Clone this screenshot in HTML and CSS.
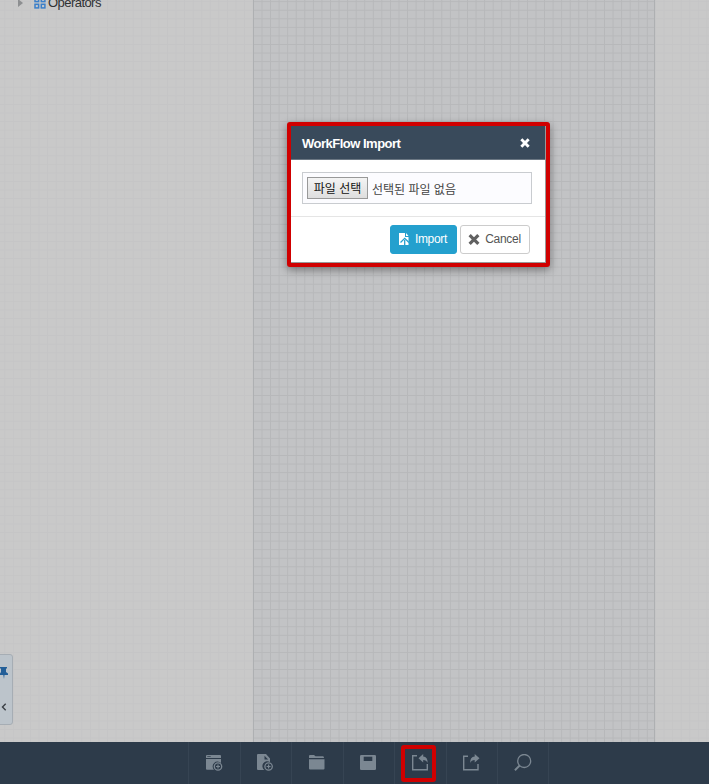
FILE: index.html
```
<!DOCTYPE html>
<html lang="ko">
<head>
<meta charset="utf-8">
<title>WorkFlow</title>
<link rel="stylesheet" href="styles.css">
</head>
<body>
<div class="app">
  <main class="workspace">
    <aside class="tree">
      <div class="tree-item">
        <svg class="arrow" width="5" height="8" viewBox="0 0 5 8"><path d="M0 0L5 4L0 8Z" fill="#8d8f91"/></svg>
        <svg class="grid-icon" width="12" height="12" viewBox="0 0 12 12" fill="none" stroke="#3b7fc9" stroke-width="1.5"><rect x="1" y="1" width="3.6" height="3.6"/><rect x="7.3" y="1" width="3.6" height="3.6"/><rect x="1" y="7.3" width="3.6" height="3.6"/><rect x="7.3" y="7.3" width="3.6" height="3.6"/></svg>
        <span>Operators</span>
      </div>
    </aside>
    <section class="canvas"></section>
    <aside class="side"></aside>
    <div class="pin-tab">
      <svg width="8" height="12" viewBox="0 0 8 12"><path d="M0 0H7V1.5H6V5L8 6.5V8H4.5L4 12L3.3 8H0V6.5L1 5V1.5H0Z" fill="#235f98"/></svg>
      <svg width="6" height="8" viewBox="0 0 6 8"><path d="M4.7 .8L1.5 4L4.7 7.2" fill="none" stroke="#3b4046" stroke-width="1.4"/></svg>
    </div>
  </main>
  <nav class="toolbar">
    <button class="tool"><svg width="18" height="18" viewBox="0 0 18 18"><path d="M2 1H15Q16 1 16 2V4H1V2Q1 1 2 1ZM1 5H16V9A4.6 4.6 0 0 0 9 15.8H2Q1 15.8 1 15Z" fill="#7b8792"/><path d="M2.5 2.5H6" stroke="#2d3b4a" stroke-dasharray="1.2 .6"/><circle cx="13" cy="12.5" r="3.7" fill="#2d3b4a" stroke="#7b8792" stroke-width="1.3"/><path d="M11 12.5H15M13 10.5V14.5" stroke="#7b8792" stroke-width="1.2"/></svg></button>
    <button class="tool"><svg width="18" height="18" viewBox="0 0 18 18"><path d="M2 0H10L14 4.5V8.2A4.7 4.7 0 0 0 8.4 16H2Q1 16 1 15V1Q1 0 2 0Z" fill="#7b8792"/><path d="M8.5 1.8V5.5H12.2Z" fill="#2d3b4a"/><circle cx="12.6" cy="12.5" r="3.7" fill="#2d3b4a" stroke="#7b8792" stroke-width="1.3"/><path d="M10.6 12.5H14.6M12.6 10.5V14.5" stroke="#7b8792" stroke-width="1.2"/></svg></button>
    <button class="tool"><svg width="18" height="18" viewBox="0 0 18 18" fill="#7b8792"><path d="M1 4V2Q1 1 2 1H6L7.5 2.3H15Q16 2.3 16 4ZM1 5.2H16.5V14.6Q16.5 15.6 15.5 15.6H2Q1 15.6 1 14.6Z"/></svg></button>
    <button class="tool"><svg width="18" height="18" viewBox="0 0 18 18"><rect x="1" y="1" width="16" height="15" rx="1.3" fill="#7b8792"/><path d="M4.7 2.7H13.3V7H4.7Z" fill="#2d3b4a"/></svg></button>
    <button class="tool marked"><svg width="18" height="18" viewBox="0 0 18 18"><path d="M6 1.7H1.7V15.8H16.3V10" fill="none" stroke="#7b8792" stroke-width="1.4"/><path d="M7.5 4.3L12.2 0V2.6Q16.8 3 16.6 9Q15.5 6.1 12.2 6V8.5Z" fill="#7b8792"/></svg></button>
    <button class="tool"><svg width="18" height="18" viewBox="0 0 18 18"><path d="M6 2.3H1.7V15.8H16V10" fill="none" stroke="#7b8792" stroke-width="1.4"/><path d="M17.5 4.3L12.7 0V2.6Q8 3 8.2 9Q9.3 6.1 12.7 6V8.5Z" fill="#7b8792"/></svg></button>
    <button class="tool"><svg width="18" height="18" viewBox="0 0 18 18" fill="none" stroke="#7b8792"><circle cx="10.2" cy="7" r="6.5" stroke-width="1.3"/><path d="M5.7 11.5L.9 16.2" stroke-width="1.9"/></svg></button>
  </nav>
</div>
<div class="dialog">
  <header class="dialog-head"><h1>WorkFlow Import</h1><svg width="10" height="10" viewBox="0 0 9 9"><path d="M1.2 1.2L7.8 7.8M7.8 1.2L1.2 7.8" stroke="#fff" stroke-width="2.6"/></svg></header>
  <div class="dialog-body"><div class="file"><button class="choose">파일 선택</button><span>선택된 파일 없음</span></div></div>
  <footer class="dialog-foot">
    <button class="btn primary"><svg width="11" height="12" viewBox="0 0 11 12"><path d="M0 0H6V4H9.5V12H0Z" fill="#fff"/><path d="M7 0L9.5 3H7Z" fill="#fff"/><path d="M1.5 9.5L5.7 5.3L10 9.5M5.7 7V12" fill="none" stroke="#24a0ce" stroke-width="1.3"/></svg><span>Import</span></button>
    <button class="btn"><svg width="12" height="11" viewBox="0 0 11 10"><path d="M1.5 1L9.5 9M9.5 1L1.5 9" stroke="#616161" stroke-width="2.9"/></svg><span>Cancel</span></button>
  </footer>
</div>
</body>
</html>
```
FILE: styles.css
```
*, *::after { box-sizing: border-box; }
body { margin: 0; font-family: "Liberation Sans", "Noto Sans CJK KR", sans-serif; font-size: 12px; overflow: hidden; }
button { font: inherit; margin: 0; padding: 0; }
svg { display: block; flex: none; }
.app { height: 784px; display: flex; flex-direction: column; }
.workspace {
  position: relative; flex: 1; display: flex; background-color: #c9c9c9;
  background-image: linear-gradient(#c5c5c6 1px, transparent 1px), linear-gradient(90deg, #c5c5c6 1px, transparent 1px);
  background-size: 8.575px 8.575px; background-position: 4.3px 1.2px;
}
.tree { width: 253px; }
.tree-item { display: flex; align-items: center; height: 16px; margin-top: -6px; padding-left: 18px; font-size: 13px; letter-spacing: -.55px; color: #303234; }
.arrow { margin-top: 2px; }
.grid-icon { margin: 2px 2px 0 11px; }
.canvas {
  width: 402px; border: solid #aeb0b2; border-width: 0 1px; background-color: #c2c3c5;
  background-image: linear-gradient(#b7b8ba 1px, transparent 1px), linear-gradient(90deg, #b7b8ba 1px, transparent 1px);
  background-size: 8.575px 8.575px; background-position: 7.5px 1.2px;
}
.side { flex: 1; }
.pin-tab { position: absolute; left: -1px; top: 654px; width: 14px; height: 71px; padding: 12px 0 0; border: 1px solid #a6adb4; border-radius: 0 3px 3px 0; background: #bcc4cb; }
.pin-tab svg + svg { margin: 24px 0 0 1px; }
.toolbar { height: 42px; background: #2d3b4a; display: flex; padding-left: 188px; }
.tool { width: 51.5px; height: 42px; display: flex; justify-content: center; align-items: flex-start; padding: 12px 1px 0 0; border: 0; border-left: 1px solid #364453; background: none; position: relative; }
.tool:last-child { width: 52px; border-right: 1px solid #364453; }
.marked::after { content: ""; position: absolute; left: 6px; top: 3px; width: 35px; height: 37px; border: 4px solid #d00000; border-radius: 3px; }
.dialog { position: absolute; left: 287px; top: 122px; width: 263px; height: 145px; border: 4px solid #d00000; border-radius: 3px; background: #fff; box-shadow: 0 3px 9px rgba(0,0,0,.4), inset -1px -1px #999; }
.dialog-head { height: 34px; margin-right: 1px; padding: 1px 15px 0 11px; display: flex; justify-content: space-between; align-items: center; background: #394a5b; border-bottom: 1px solid #6b7783; color: #fff; }
.dialog-head h1 { margin: 0; font-size: 13px; letter-spacing: -.5px; }
.dialog-body { height: 57px; padding: 12px 13px 0 11px; border-bottom: 1px solid #e5e5e5; margin-right: 1px; }
.file { height: 32px; padding: 0 4px; display: flex; align-items: center; gap: 4px; border: 1px solid #c9ccd0; background: #fcfcff; color: #444; white-space: nowrap; }
.choose { width: 61px; height: 22px; border: 1px solid #999; background: linear-gradient(#f4f4f4, #dedede); color: #111; line-height: 18px; padding-top: 2px; }
.dialog-foot { display: flex; justify-content: flex-end; gap: 3px; padding: 8px 16.5px 0 0; }
.btn { height: 29px; width: 70px; display: flex; justify-content: center; align-items: center; gap: 5px; border: 1px solid #ccc; border-radius: 3px; background: #fff; color: #555; letter-spacing: -.3px; padding-bottom: 1px; }
.primary { width: 67px; border-color: #24a0ce; background: #24a0ce; color: #fff; }
```
